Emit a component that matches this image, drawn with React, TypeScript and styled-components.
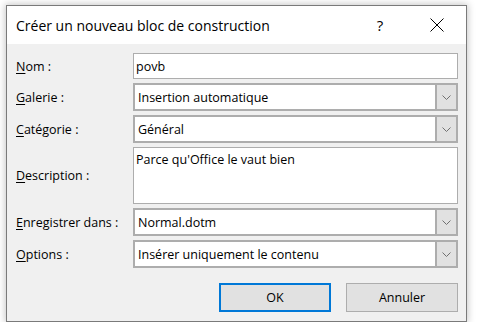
import React, { FC } from "react";
import styled, { createGlobalStyle } from "styled-components";

const GlobalStyle = createGlobalStyle`
  html, body {
    margin: 0;
    padding: 0;
    background: #ffffff;
  }
  body {
    font-family: "Open Sans", "Noto Sans", sans-serif;
    color: #000000;
  }
`;

type FieldRow = {
  label: string;
  accessKey: string;
  value: string;
  kind: "input" | "combo" | "area";
};

const rows: FieldRow[] = [
  { label: "Nom :", accessKey: "N", value: "povb", kind: "input" },
  { label: "Galerie :", accessKey: "G", value: "Insertion automatique", kind: "combo" },
  { label: "Catégorie :", accessKey: "C", value: "Général", kind: "combo" },
  { label: "Description :", accessKey: "D", value: "Parce qu'Office le vaut bien", kind: "area" },
  { label: "Enregistrer dans :", accessKey: "E", value: "Normal.dotm", kind: "combo" },
  { label: "Options :", accessKey: "O", value: "Insérer uniquement le contenu", kind: "combo" },
];

const Chevron: FC = () => (
  <svg width="9" height="5" viewBox="0 0 9 5">
    <path d="M0.5 0.5 L4.5 4.5 L8.5 0.5" fill="none" stroke="#707070" strokeWidth="1" />
  </svg>
);

const CloseIcon: FC = () => (
  <svg width="14" height="14" viewBox="0 0 14 14">
    <path d="M0.5 0.5 L13.5 13.5 M13.5 0.5 L0.5 13.5" stroke="#000" strokeWidth="1" />
  </svg>
);

const Label: FC<{ text: string; accessKey: string }> = ({ text, accessKey }) => (
  <LabelText>
    <u>{accessKey}</u>
    {text.slice(1)}
  </LabelText>
);

export default function App() {
  return (
    <>
      <GlobalStyle />
      <Dialog>
        <TitleBar>
          <Title>Créer un nouveau bloc de construction</Title>
          <TitleButtons>
            <HelpButton>?</HelpButton>
            <CloseButton>
              <CloseIcon />
            </CloseButton>
          </TitleButtons>
        </TitleBar>

        <Body>
          <Form>
            {rows.map((row) => (
              <React.Fragment key={row.label}>
                <Label text={row.label} accessKey={row.accessKey} />
                {row.kind === "input" && <TextBox>{row.value}</TextBox>}
                {row.kind === "area" && <TextArea>{row.value}</TextArea>}
                {row.kind === "combo" && (
                  <Combo>
                    <ComboValue>{row.value}</ComboValue>
                    <DropButton>
                      <Chevron />
                    </DropButton>
                  </Combo>
                )}
              </React.Fragment>
            ))}
          </Form>

          <Actions>
            <PushButton $primary>OK</PushButton>
            <PushButton>Annuler</PushButton>
          </Actions>
        </Body>
      </Dialog>
    </>
  );
}

const Dialog = styled.div`
  width: 461px;
  height: 317px;
  box-sizing: border-box;
  margin: 5px 0 0 6px;
  display: flex;
  flex-direction: column;
  border: 1px solid #7a7a7a;
  background: #f0f0f0;
  box-shadow: 0 0 7px 1px rgba(0, 0, 0, 0.22);
`;

const TitleBar = styled.div`
  height: 38px;
  flex: none;
  display: flex;
  align-items: center;
  justify-content: space-between;
  padding-left: 9px;
  padding-right: 6px;
  background: #ffffff;
`;

const Title = styled.span`
  font-size: 14px;
  color: #000000;
`;

const TitleButtons = styled.div`
  display: flex;
  align-items: center;
`;

const HelpButton = styled.span`
  width: 46px;
  margin-right: 11px;
  text-align: center;
  font-size: 15px;
`;

const CloseButton = styled.span`
  width: 46px;
  height: 38px;
  display: flex;
  align-items: center;
  justify-content: center;
`;

const Body = styled.div`
  flex: 1;
  display: flex;
  flex-direction: column;
  padding: 9px 8px 0 9px;
`;

const Form = styled.div`
  display: grid;
  grid-template-columns: 117px 325px;
  grid-template-rows: 26px 28px 28px 57px 28px 28px;
  row-gap: 4px;
  align-items: center;
`;

const LabelText = styled.span`
  font-size: 12.5px;
  white-space: nowrap;

  u {
    text-decoration-thickness: 1px;
    text-underline-offset: 2px;
  }
`;

const fieldText = `
  font-size: 12.5px;
  color: #000000;
  box-sizing: border-box;
  background: #ffffff;
  border: 1px solid #adadad;
`;

const TextBox = styled.div`
  ${fieldText}
  height: 26px;
  display: flex;
  align-items: center;
  padding-left: 2px;
`;

const TextArea = styled.div`
  ${fieldText}
  height: 57px;
  padding: 3px 2px;
  align-self: stretch;
`;

const Combo = styled.div`
  ${fieldText}
  height: 28px;
  display: flex;
  align-items: stretch;
  border-width: 2px;
`;

const ComboValue = styled.span`
  flex: 1;
  display: flex;
  align-items: center;
  padding-left: 3px;
`;

const DropButton = styled.span`
  width: 19px;
  display: flex;
  align-items: center;
  justify-content: center;
  background: #e1e1e1;
  border-left: 2px solid #adadad;
`;

const Actions = styled.div`
  display: flex;
  justify-content: flex-end;
  gap: 15px;
  margin-top: 15px;
`;

const PushButton = styled.button<{ $primary?: boolean }>`
  width: 112px;
  height: 29px;
  box-sizing: border-box;
  font-family: "Open Sans", "Noto Sans", sans-serif;
  font-size: 12.5px;
  color: #000000;
  background: #e1e1e1;
  border: ${(p) => (p.$primary ? "2px solid #0078d7" : "1px solid #adadad")};
  padding: 0;
`;
